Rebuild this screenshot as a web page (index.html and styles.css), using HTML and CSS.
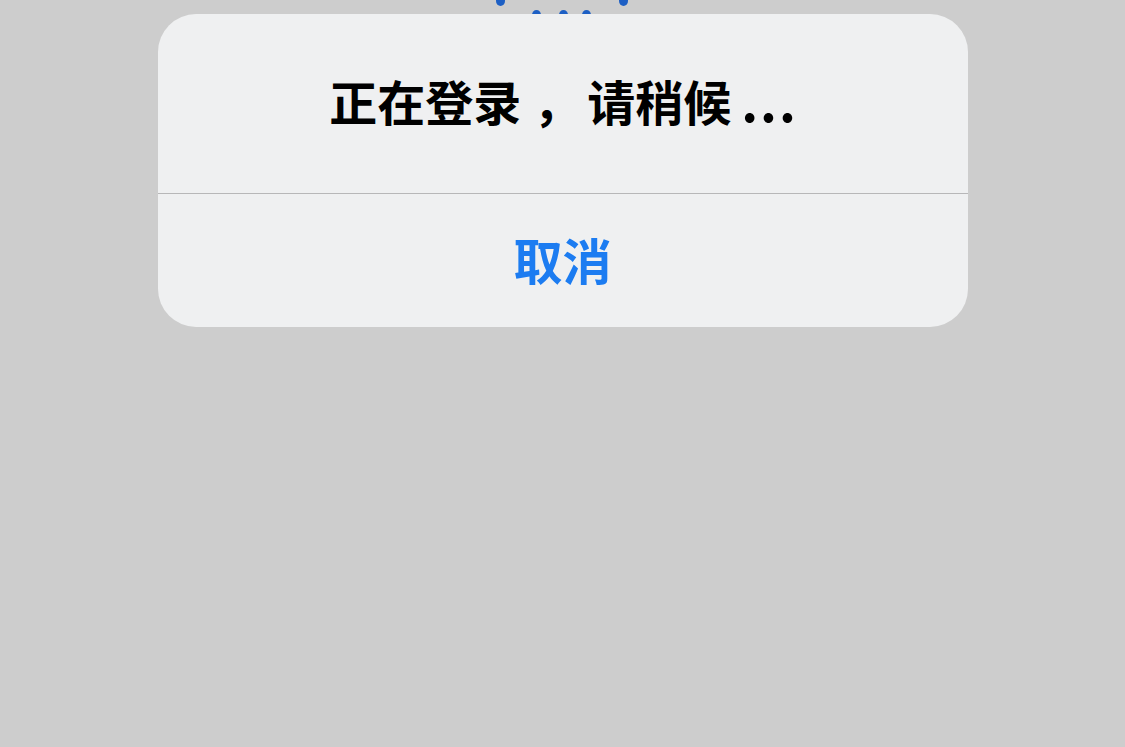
FILE: index.html
```html
<!DOCTYPE html>
<html lang="zh-CN">
<head>
<meta charset="utf-8">
<link rel="stylesheet" href="styles.css">
</head>
<body>
<div class="screen">
  <div class="behind">
    <span class="dot d1"></span>
    <span class="dot d2"></span>
    <span class="dot d3"></span>
    <span class="dot d4"></span>
    <span class="dot d5"></span>
  </div>
  <div class="alert">
    <div class="alert-title">正在登录<span class="comma">，</span>请稍候<span class="dots">...</span></div>
    <div class="alert-action">取消</div>
  </div>
</div>
</body>
</html>
```

FILE: styles.css
```css
html, body {
  margin: 0;
  padding: 0;
  background: #cdcdcd;
}
.screen {
  position: relative;
  width: 1125px;
  height: 747px;
  overflow: hidden;
  display: flex;
  flex-direction: column;
  align-items: center;
  padding-top: 14px;
  box-sizing: border-box;
  font-family: "Noto Sans CJK SC", "Noto Sans", sans-serif;
}
.behind {
  position: absolute;
  left: 0;
  top: 0;
  width: 100%;
  height: 20px;
}
.dot {
  position: absolute;
  width: 9px;
  height: 10px;
  border-radius: 50%;
  background: #1d5fc4;
}
.d1 { left: 496px; top: -4px; }
.d2 { left: 532px; top: 10px; }
.d3 { left: 559px; top: 10px; }
.d4 { left: 582px; top: 10px; }
.d5 { left: 619px; top: -4px; }
.alert {
  position: relative;
  width: 810px;
  height: 313px;
  background: #eff0f1;
  border-radius: 38px;
  display: flex;
  flex-direction: column;
  overflow: hidden;
}
.alert-title {
  height: 180px;
  display: flex;
  align-items: center;
  justify-content: center;
  font-size: 48px;
  font-weight: 700;
  color: #000;
  border-bottom: 1px solid #b7b7b8;
  box-sizing: border-box;
  padding-bottom: 8px;
}
.comma {
  display: inline-block;
  width: 66px;
  padding-left: 12px;
  box-sizing: border-box;
  white-space: nowrap;
}
.dots {
  font-size: 52px;
  letter-spacing: 2px;
  margin-left: 10px;
  margin-right: -2px;
}
.alert-action {
  flex: 1;
  display: flex;
  align-items: center;
  justify-content: center;
  font-size: 49px;
  font-weight: 600;
  color: #1c7cf1;
  padding-bottom: 4px;
}
```
